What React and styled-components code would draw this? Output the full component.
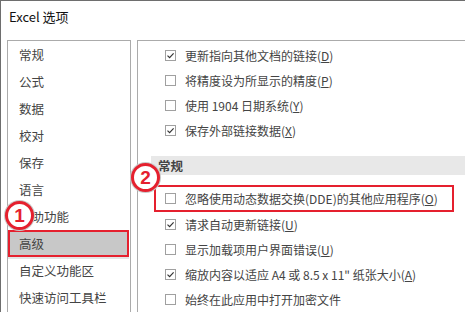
import styled, { createGlobalStyle } from "styled-components";

const GlobalStyle = createGlobalStyle`
  html, body {
    margin: 0;
    padding: 0;
    background: #fff;
  }
  body {
    font-family: "Noto Sans CJK SC", "Liberation Sans", sans-serif;
  }
`;

const Window = styled.div`
  position: relative;
  width: 465px;
  height: 312px;
  overflow: hidden;
  box-sizing: border-box;
  border-top: 1px solid #6e6e6e;
  border-left: 1px solid #6e6e6e;
  background: #fff;
`;

const TitleBar = styled.div`
  height: 39px;
  box-sizing: border-box;
  padding: 6px 0 0 8px;
  font-size: 13px;
  color: #111;
  line-height: 20px;
`;

const Body = styled.div`
  display: flex;
  gap: 6px;
  padding-left: 6px;
  height: 272px;
`;

const Nav = styled.div`
  width: 124px;
  box-sizing: border-box;
  border: 1px solid #ababab;
  border-bottom: none;
  display: flex;
  flex-direction: column;
`;

const NavItem = styled.div`
  height: 27px;
  box-sizing: border-box;
  display: flex;
  align-items: center;
  padding-left: ${(p) => (p.$active ? "9px" : "11px")};
  font-size: 12.5px;
  color: #444;
  background: ${(p) => (p.$active ? "#c8c8c8" : "transparent")};
  border: ${(p) => (p.$active ? "2px solid #e5202e" : "none")};
  margin: ${(p) => (p.$active ? "0 1px 0 0" : "0")};
  box-shadow: ${(p) => (p.$active ? "0 2px 0 #e4e4e4" : "none")};
`;

const Content = styled.div`
  flex: 1;
  box-sizing: border-box;
  border-top: 1px solid #ababab;
  border-left: 1px solid #ababab;
  padding-top: 2px;
  display: flex;
  flex-direction: column;
`;

const Row = styled.div`
  height: 25px;
  display: flex;
  align-items: center;
  gap: 9px;
  padding-left: 27px;
  font-size: 12px;
  color: #444;
  white-space: nowrap;
`;

const Highlight = styled(Row)`
  height: 27px;
  width: 300px;
  box-sizing: border-box;
  margin-left: 16px;
  margin-top: 10px;
  padding-left: 9px;
  border: 2px solid #e5202e;
`;

const Box = styled.span`
  width: 11px;
  height: 11px;
  box-sizing: border-box;
  border: 1px solid #a0a0a0;
  background: #fff;
  display: inline-flex;
  align-items: center;
  justify-content: center;
  flex: none;
`;

const Key = styled.span`
  text-decoration: underline;
  text-underline-offset: 1px;
`;

const SectionHeader = styled.div`
  margin: 13px 0 0 13px;
  height: 20px;
  background: #e8e8e8;
  display: flex;
  align-items: center;
  padding-left: 7px;
  font-size: 12.5px;
  font-weight: bold;
  color: #444;
`;

const Badge = styled.div`
  position: absolute;
  left: ${(p) => p.$x}px;
  top: ${(p) => p.$y}px;
  width: 29px;
  height: 29px;
  box-sizing: border-box;
  border-radius: 50%;
  border: 3px solid #e5202e;
  background: #fff;
  box-shadow: 0 0 0 1px #c9c9c9;
  display: flex;
  align-items: center;
  justify-content: center;
  font-family: "Liberation Sans", Arial, sans-serif;
  font-weight: bold;
  font-size: 19px;
  color: #e5202e;
  line-height: 1;
`;

const Check = () => (
  <svg width="9" height="9" viewBox="0 0 9 9">
    <path d="M1.5 4.6 L3.6 6.6 L7.6 2.4" fill="none" stroke="#333" strokeWidth="1.2" />
  </svg>
);

const Checkbox = ({ checked }) => <Box>{checked && <Check />}</Box>;

const navItems = [
  "常规",
  "公式",
  "数据",
  "校对",
  "保存",
  "语言",
  "辅助功能",
  "高级",
  "自定义功能区",
  "快速访问工具栏",
];

const Option = ({ checked, label, k }) => (
  <Row>
    <Checkbox checked={checked} />
    <span>
      {label}
      {k && (
        <>
          (<Key>{k}</Key>)
        </>
      )}
    </span>
  </Row>
);

export default function App() {
  return (
    <>
      <GlobalStyle />
      <Window>
        <TitleBar>Excel 选项</TitleBar>
        <Body>
          <Nav>
            {navItems.map((n) => (
              <NavItem key={n} $active={n === "高级"}>
                {n}
              </NavItem>
            ))}
          </Nav>
          <Content>
            <Option checked label="更新指向其他文档的链接" k="D" />
            <Option label="将精度设为所显示的精度" k="P" />
            <Option label="使用 1904 日期系统" k="Y" />
            <Option checked label="保存外部链接数据" k="X" />
            <SectionHeader>常规</SectionHeader>
            <Highlight>
              <Checkbox />
              <span>
                忽略使用动态数据交换(DDE)的其他应用程序(<Key>O</Key>)
              </span>
            </Highlight>
            <Option checked label="请求自动更新链接" k="U" />
            <Option label="显示加载项用户界面错误" k="U" />
            <Option checked label={'缩放内容以适应 A4 或 8.5 x 11" 纸张大小'} k="A" />
            <Option label="始终在此应用中打开加密文件" />
          </Content>
        </Body>
        <Badge $x={4} $y={200}>1</Badge>
        <Badge $x={130} $y={162}>2</Badge>
      </Window>
    </>
  );
}
